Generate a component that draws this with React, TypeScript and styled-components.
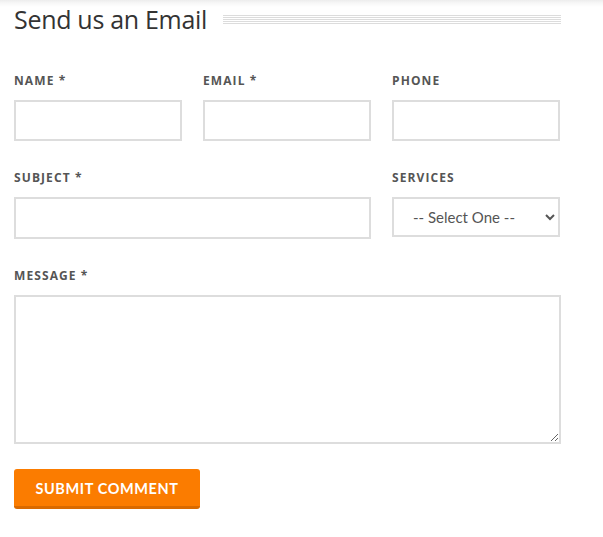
import React from "react";
import styled, { createGlobalStyle } from "styled-components";

const Global = createGlobalStyle`
  html, body { margin: 0; padding: 0; background: #fff; }
  body { font-family: "Open Sans", "Liberation Sans", sans-serif; }
  * { box-sizing: border-box; }
`;

const Page = styled.div`
  width: 603px;
  min-height: 537px;
  padding: 3px 0 0 14px;
  background: linear-gradient(to bottom, #ededed 0, #f7f7f7 3px, #fff 7px) no-repeat;
`;

const TitleRow = styled.div`
  display: flex;
  align-items: center;
  width: 547px;
  gap: 16px;
`;

const Title = styled.h2`
  margin: 0;
  font-family: "Open Sans", "Liberation Sans", sans-serif;
  font-weight: 400;
  font-size: 25px;
  line-height: 32px;
  color: #333;
  white-space: nowrap;
  letter-spacing: -0.3px;
`;

const Stripes = styled.div`
  flex: 1;
  height: 10px;
  margin-top: 1px;
  background: repeating-linear-gradient(
    to bottom,
    #dcdcdc 0,
    #dcdcdc 1px,
    #fff 1px,
    #fff 2px
  );
`;

const Form = styled.form`
  display: grid;
  grid-template-columns: repeat(3, 168px);
  column-gap: 21px;
  row-gap: 26px;
  margin-top: 35px;
`;

const Field = styled.div<{ $span?: number }>`
  display: flex;
  flex-direction: column;
  grid-column: span ${(p) => p.$span ?? 1};
`;

const Label = styled.label`
  display: block;
  font-family: "Open Sans", "Liberation Sans", sans-serif;
  font-weight: 700;
  font-size: 12px;
  line-height: 18px;
  letter-spacing: 1.1px;
  color: #555;
  padding-top: 2px;
  margin-bottom: 10px;
`;

const Input = styled.input<{ $h?: number }>`
  width: 100%;
  height: ${(p) => p.$h ?? 41}px;
  border: 2px solid #dddddd;
  background: #fff;
  outline: none;
  padding: 0 10px;
  font-family: "Lato", sans-serif;
  font-size: 15px;
`;

const Select = styled.select`
  width: 100%;
  height: 40px;
  border: 2px solid #dddddd;
  border-radius: 0;
  background: #fff;
  padding: 0 10px 0 15px;
  font-family: "Lato", sans-serif;
  font-size: 15px;
  color: #555;
  outline: none;
`;

const TextArea = styled.textarea`
  width: 547px;
  height: 149px;
  border: 2px solid #dddddd;
  background: #fff;
  outline: none;
  display: block;
  font-family: "Lato", sans-serif;
  font-size: 15px;
`;

const Button = styled.button`
  display: block;
  margin-top: 25px;
  width: 186px;
  height: 40px;
  background: #fb7c00;
  border: none;
  border-bottom: 3px solid #d96a00;
  border-radius: 3px;
  color: #fff;
  font-family: "Lato", sans-serif;
  font-weight: 700;
  font-size: 14.5px;
  letter-spacing: 0.6px;
  padding: 0;
  padding-top: 2px;
  cursor: pointer;
`;

export default function App() {
  return (
    <>
      <Global />
      <Page>
        <TitleRow>
          <Title>Send us an Email</Title>
          <Stripes />
        </TitleRow>
        <Form onSubmit={(e) => e.preventDefault()}>
          <Field>
            <Label>NAME *</Label>
            <Input type="text" />
          </Field>
          <Field>
            <Label>EMAIL *</Label>
            <Input type="email" />
          </Field>
          <Field>
            <Label>PHONE</Label>
            <Input type="tel" />
          </Field>
          <Field $span={2}>
            <Label>SUBJECT *</Label>
            <Input type="text" $h={42} />
          </Field>
          <Field>
            <Label>SERVICES</Label>
            <Select defaultValue="">
              <option value="">-- Select One --</option>
            </Select>
          </Field>
          <Field $span={3}>
            <Label>MESSAGE *</Label>
            <TextArea />
          </Field>
        </Form>
        <Button type="button">SUBMIT COMMENT</Button>
      </Page>
    </>
  );
}
